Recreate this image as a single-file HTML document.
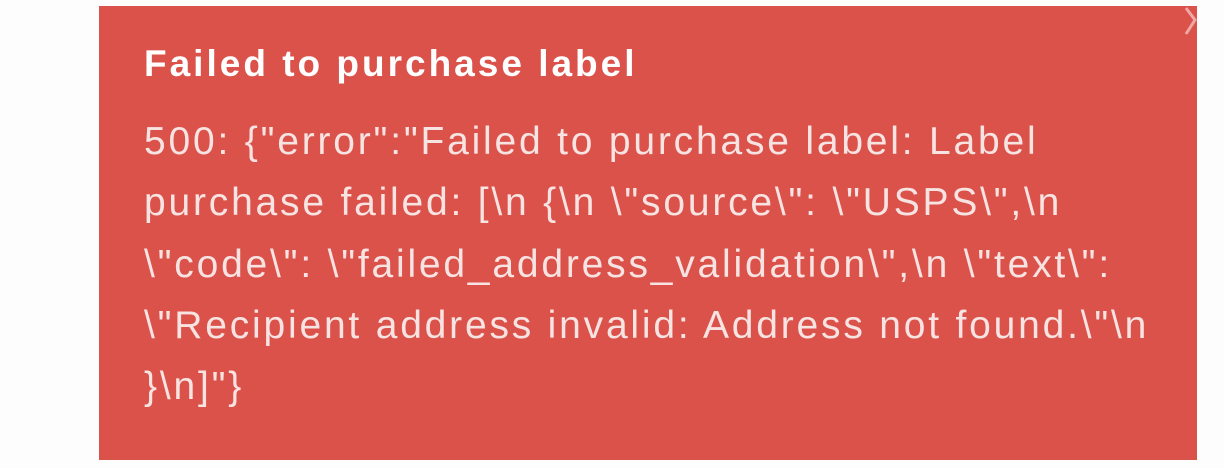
<!DOCTYPE html>
<html><head><style>
html,body{margin:0;padding:0;background:#fdfdfd;width:1224px;height:468px;overflow:hidden}
.box{position:absolute;left:99px;top:6px;width:1098px;height:454px;background:#db524b}
.t{position:absolute;left:45px;top:37px;font:bold 37px "Liberation Sans",sans-serif;letter-spacing:3px;color:#fff;white-space:nowrap}
.b{position:absolute;left:45px;top:105px;font:39px/61.3px "Liberation Sans",sans-serif;letter-spacing:2.8px;color:#f7e3e1;white-space:nowrap}
.x{position:absolute;left:1183px;top:6px}
</style></head><body>
<div class="box">
<div class="t">Failed to purchase label</div>
<div class="b">500: {"error":"Failed to purchase label: Label<br>purchase failed: [\n {\n \"source\": \"USPS\",\n<br>\"code\": \"failed_address_validation\",\n \"text\":<br>\"Recipient address invalid: Address not found.\"\n<br>}\n]"}</div>
</div>
<svg class="x" width="14" height="30"><path d="M3 2 L12 14 L3 28" stroke="#f0a8a4" stroke-width="3" fill="none"/></svg>
</body></html>
